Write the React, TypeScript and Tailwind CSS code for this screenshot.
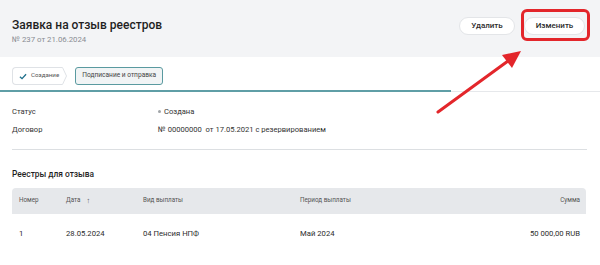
import React from "react";

export default function App() {
  return (
    <div className="relative w-[600px] h-[265px] overflow-hidden bg-white text-[#1f1f1f]" style={{ fontFamily: "Roboto, 'Noto Sans', sans-serif" }}>
      {/* Header */}
      <div className="h-[57px] bg-[#f3f4f6] flex items-start justify-between px-3 pt-[17px]">
        <div>
          <div className="text-[12px] font-medium leading-[16px]">Заявка на отзыв реестров</div>
          <div className="text-[7.8px] text-[#8a8d93] mt-[2px] leading-[10px]">№ 237 от 21.06.2024</div>
        </div>
        <div className="flex gap-[9px] pr-[3px]">
          <button className="h-[18px] w-[56px] rounded-full bg-white border border-[#e3e5e8] text-[8px] text-[#2b2b2b] font-medium">Удалить</button>
          <button className="h-[18px] w-[61px] rounded-full bg-white border border-[#e3e5e8] text-[8px] text-[#2b2b2b] font-medium">Изменить</button>
        </div>
      </div>
      {/* Steps */}
      <div className="flex items-start gap-[8px] px-3 pt-[10px] h-[33px]">
        <div className="relative h-[18px] flex items-center">
          <div className="h-[18px] flex items-center gap-[4px] pl-[6px] pr-[3px] bg-white border border-[#dfe2e6] border-r-0 rounded-l-[4px] text-[6.2px] text-[#555]">
            <svg width="8" height="7" viewBox="0 0 9 8"><path d="M1 4.2 L3.4 6.5 L8 1.5" stroke="#1f6f8b" strokeWidth="1.5" fill="none" /></svg>
            <span>Создание</span>
          </div>
          <svg width="5" height="18" viewBox="0 0 5 18"><path d="M0 0.5 L0.5 0.5 L4.5 9 L0.5 17.5 L0 17.5" fill="white" stroke="#dfe2e6" strokeWidth="1" /></svg>
        </div>
        <div className="h-[18px] flex items-center px-[6px] bg-[#f1f4f5] border border-[#5a9aa0] rounded-[3px] text-[6.6px] text-[#444]">Подписание и отправка</div>
      </div>
      {/* progress line */}
      <div className="flex h-[2px]">
        <div className="w-[451px] bg-[#5f9ea6]" />
        <div className="flex-1 h-[1px] bg-[#e6e8eb] mt-[1px]" />
      </div>
      {/* Info */}
      <div className="px-3 pt-[11px] text-[7.6px] text-[#333]">
        <div className="flex h-[18px] items-center">
          <div className="w-[146px]">Статус</div>
          <div className="flex items-center gap-[3px]"><span className="w-[3px] h-[3px] rounded-full bg-[#a0a4a8]" /><span>Создана</span></div>
        </div>
        <div className="flex h-[18px] items-center">
          <div className="w-[146px]">Договор</div>
          <div className="whitespace-pre">№ 00000000  от 17.05.2021 с резервированием</div>
        </div>
        <div className="h-[1px] bg-[#dcdfe2] mt-[10px] mr-[1px]" />
        <div className="text-[8.4px] font-medium text-[#1f1f1f] mt-[18px] leading-[12px]">Реестры для отзыва</div>
        {/* table */}
        <div className="mt-[8px] mr-[2px]">
          <div className="h-[26px] bg-[#e6e8eb] rounded-t-[4px] flex items-center text-[6.3px] text-[#555] pl-[7px] pr-[6px]">
            <div className="w-[47px]">Номер</div>
            <div className="w-[77px] flex items-center gap-[6px]">Дата <span className="text-[7.5px]">↑</span></div>
            <div className="w-[157px]">Вид выплаты</div>
            <div className="flex-1">Период выплаты</div>
            <div>Сумма</div>
          </div>
          <div className="h-[40px] flex items-center text-[7.7px] text-[#2b2b2b] pl-[7px] pr-[6px]">
            <div className="w-[47px]">1</div>
            <div className="w-[77px]">28.05.2024</div>
            <div className="w-[157px]">04 Пенсия НПФ</div>
            <div className="flex-1">Май 2024</div>
            <div>50 000,00 RUB</div>
          </div>
        </div>
      </div>
      {/* Annotation */}
      <div className="absolute left-[521px] top-[9px] w-[69px] h-[32px] border-[3px] border-[#e3262b] rounded-[6px]" />
      <svg className="absolute left-0 top-0" width="600" height="265" viewBox="0 0 600 265">
        <line x1="438" y1="112" x2="508" y2="61" stroke="#e3262b" strokeWidth="3" strokeLinecap="round" />
        <polygon points="521,51 502,55 512,68" fill="#e3262b" />
      </svg>
    </div>
  );
}
